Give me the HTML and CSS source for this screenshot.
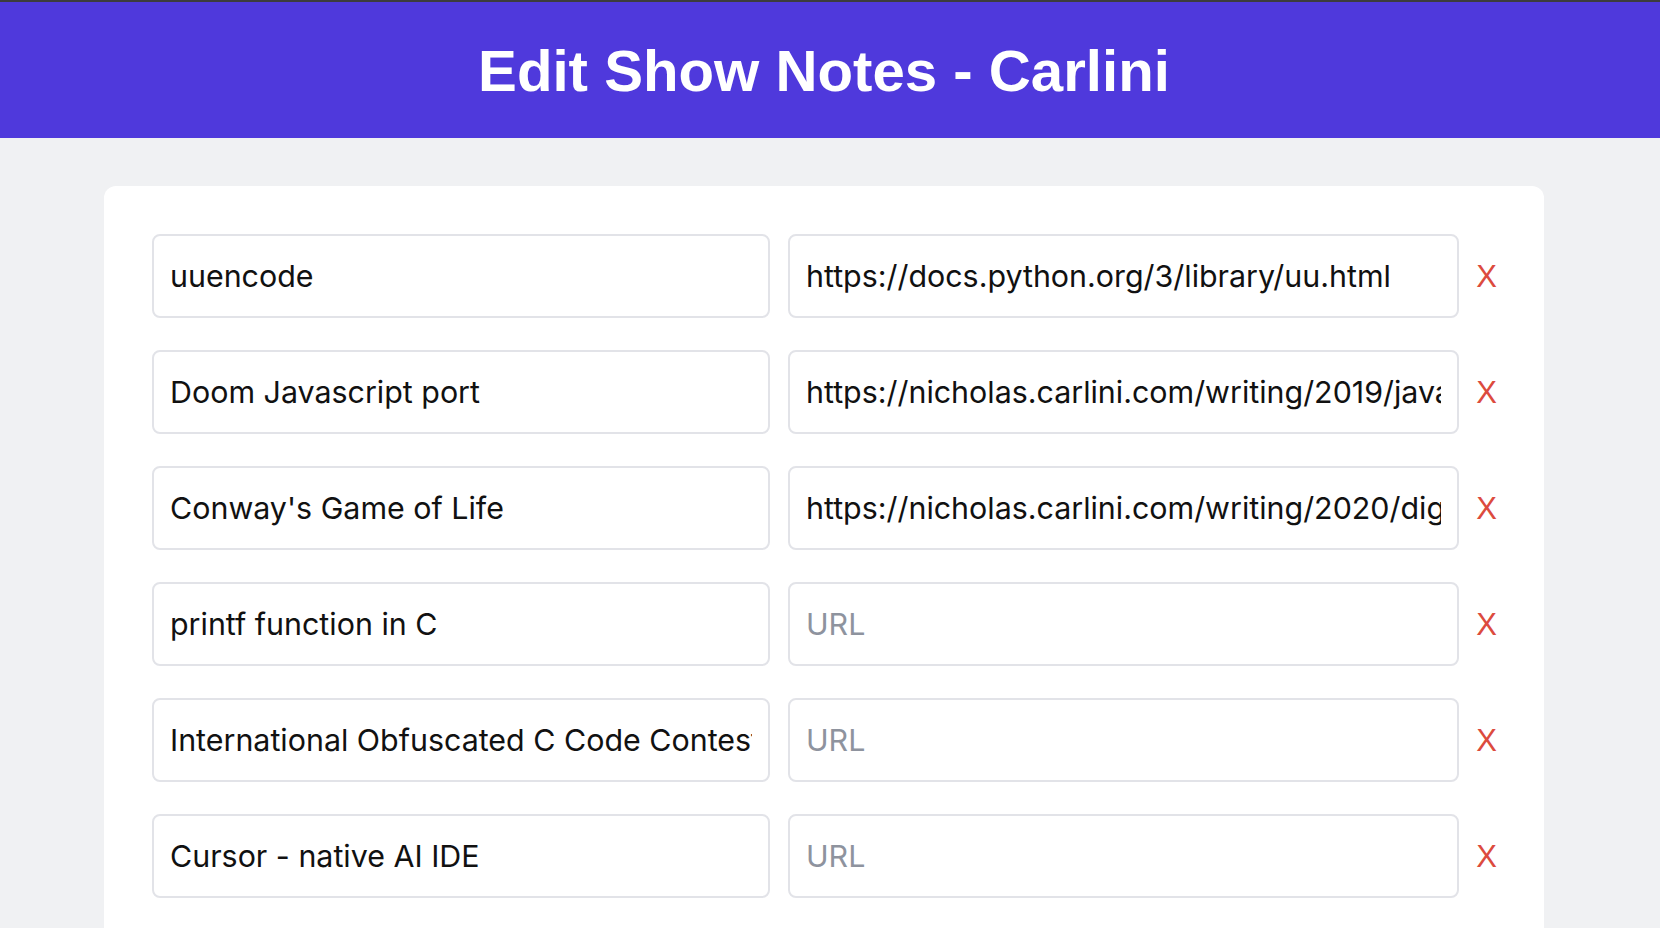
FILE: index.html
```html
<!DOCTYPE html>
<html lang="en">
<head>
<meta charset="utf-8">
<title>Edit Show Notes - Carlini</title>
<link rel="stylesheet" href="styles.css">
</head>
<body>
<header class="header">
  <h1 class="title">Edit Show Notes - Carlini</h1>
</header>
<main class="main">
  <section class="card">
    <div class="row">
      <input class="field field-title" type="text" value="uuencode" placeholder="Title">
      <input class="field field-url" type="text" value="https://docs.python.org/3/library/uu.html" placeholder="URL">
      <button class="remove" type="button">X</button>
    </div>
    <div class="row">
      <input class="field field-title" type="text" value="Doom Javascript port" placeholder="Title">
      <input class="field field-url" type="text" value="https://nicholas.carlini.com/writing/2019/javascript-doom" placeholder="URL">
      <button class="remove" type="button">X</button>
    </div>
    <div class="row">
      <input class="field field-title" type="text" value="Conway's Game of Life" placeholder="Title">
      <input class="field field-url" type="text" value="https://nicholas.carlini.com/writing/2020/digital-logic-game-of-life.html" placeholder="URL">
      <button class="remove" type="button">X</button>
    </div>
    <div class="row">
      <input class="field field-title" type="text" value="printf function in C" placeholder="Title">
      <input class="field field-url" type="text" value="" placeholder="URL">
      <button class="remove" type="button">X</button>
    </div>
    <div class="row">
      <input class="field field-title" type="text" value="International Obfuscated C Code Contest" placeholder="Title">
      <input class="field field-url" type="text" value="" placeholder="URL">
      <button class="remove" type="button">X</button>
    </div>
    <div class="row">
      <input class="field field-title" type="text" value="Cursor - native AI IDE" placeholder="Title">
      <input class="field field-url" type="text" value="" placeholder="URL">
      <button class="remove" type="button">X</button>
    </div>
  </section>
</main>
</body>
</html>
```

FILE: styles.css
```css
html, body {
  margin: 0;
  padding: 0;
}

body {
  background: #f0f1f3;
  font-family: Inter, "Noto Sans", "Liberation Sans", sans-serif;
  border-top: 2px solid #3c3c3e;
}

.header {
  height: 136px;
  background: #4f39dc;
  display: flex;
  align-items: center;
  justify-content: center;
  padding-right: 12px;
}

.title {
  margin: 0;
  color: #ffffff;
  font-family: "Liberation Sans", Arial, sans-serif;
  font-weight: 700;
  font-size: 58.2px;
  letter-spacing: 0;
}

.main {
  padding: 48px 116px 0 104px;
}

.card {
  background: #ffffff;
  border-radius: 12px;
  padding: 48px;
  display: flex;
  flex-direction: column;
  gap: 32px;
}

.row {
  display: flex;
  align-items: center;
  gap: 18px;
}

.field {
  box-sizing: border-box;
  height: 84px;
  margin: 0;
  border: 2px solid #e2e3e8;
  border-radius: 8px;
  padding: 0 16px;
  font-family: Inter, "Noto Sans", "Liberation Sans", sans-serif;
  font-size: 30.4px;
  color: #111111;
  background: #ffffff;
  outline: none;
}

.field::placeholder {
  color: #8e939e;
}

.field-title {
  width: 618px;
  flex: none;
}

.field-url {
  flex: 1;
  min-width: 0;
}

.remove {
  flex: none;
  width: 19px;
  background: none;
  border: none;
  padding: 0;
  display: flex;
  justify-content: center;
  color: #dc4b3e;
  font-family: "Liberation Sans", Arial, sans-serif;
  font-size: 31px;
  line-height: 1;
  cursor: pointer;
}
```
